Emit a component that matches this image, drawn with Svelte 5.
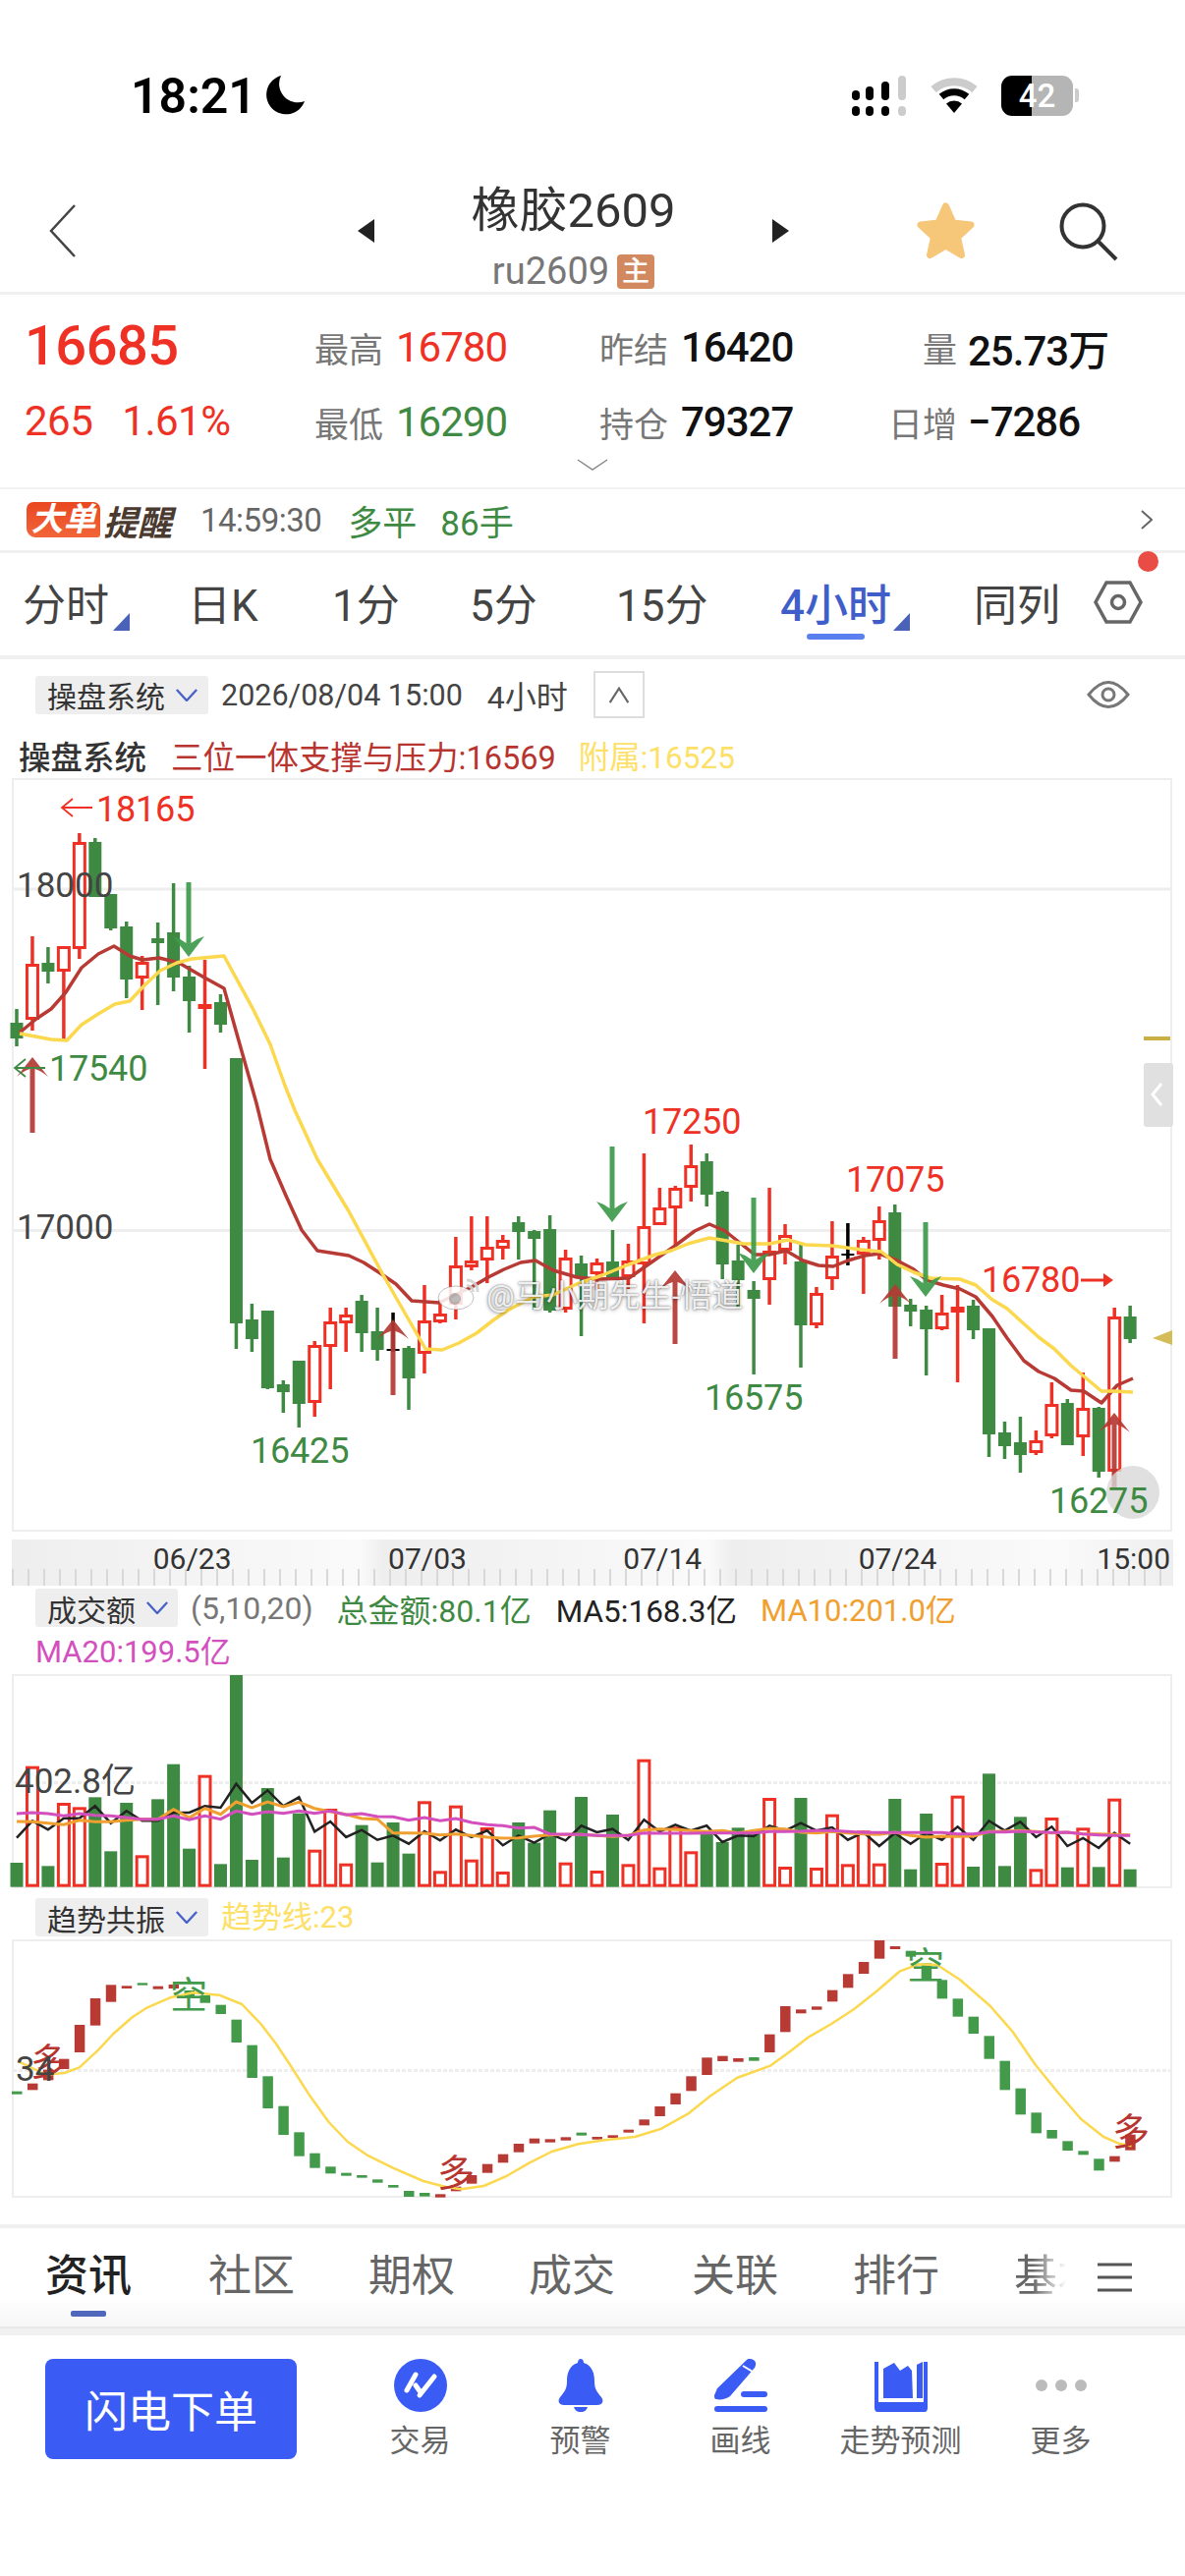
<script>
  const xOf = (i) => 17 + 15.96 * i;
  const pts = (a) => a.map((p) => p.join(',')).join(' ');
  const candles = [
    ['g',1041,1057,1027,1065],['r',981,1038,953,1049],['g',980,989,964,1001],['r',963,989,963,1058],
    ['r',857,966,848,976],['g',857,913,853,913],['g',910,945,910,947],['g',943,997,938,1016],
    ['r',979,996,973,1028],['g',955,960,939,1023],['g',949,995,899,1009],['g',994,1019,983,1051],
    ['r',1022,1027,977,1088],['g',1020,1043,1012,1051],['g',1077,1347,1077,1373],['g',1343,1363,1327,1376],
    ['g',1334,1413,1334,1414],['g',1409,1417,1405,1438],['g',1385,1429,1385,1453],['r',1369,1428,1365,1442],
    ['r',1345,1371,1331,1414],['r',1338,1347,1331,1376],['g',1324,1357,1318,1376],['g',1355,1374,1331,1385],
    ['k',1373,1375,1336,1376],['g',1372,1403,1370,1435],['r',1344,1378,1308,1398],['r',1337,1346,1323,1347],
    ['r',1288,1328,1259,1343],['r',1283,1290,1238,1293],['r',1269,1283,1238,1306],['r',1262,1271,1257,1282],
    ['g',1244,1254,1238,1282],['g',1253,1261,1252,1333],['g',1251,1334,1237,1336],['r',1280,1333,1272,1336],
    ['g',1286,1300,1278,1360],['r',1285,1297,1281,1313],['g',1284,1300,1252,1303],['r',1283,1300,1266,1312],
    ['r',1248,1287,1174,1347],['r',1229,1247,1209,1247],['r',1209,1230,1207,1268],['r',1186,1209,1165,1223],
    ['g',1182,1216,1174,1228],['g',1213,1287,1212,1302],['g',1283,1303,1267,1332],['g',1313,1322,1304,1399],
    ['r',1273,1303,1209,1328],['r',1257,1273,1246,1287],['g',1284,1349,1267,1392],['r',1316,1349,1310,1352],
    ['r',1278,1302,1243,1313],['k',1276,1278,1245,1288],['r',1262,1277,1259,1317],['r',1242,1263,1228,1282],
    ['g',1234,1330,1226,1330],['g',1328,1335,1322,1350],['g',1333,1353,1329,1400],['r',1336,1353,1318,1354],
    ['r',1330,1336,1308,1407],['g',1329,1354,1323,1363],['g',1352,1460,1352,1483],['g',1458,1472,1447,1485],
    ['g',1468,1481,1442,1499],['r',1466,1479,1456,1481],['r',1429,1462,1407,1464],['g',1428,1471,1424,1471],
    ['r',1433,1463,1397,1482],['g',1433,1498,1432,1504],['r',1340,1498,1331,1513],['g',1340,1363,1329,1367]
  ];
  const ma1 = [[20,1051],[37,1037],[52,1027],[67,1010],[83,985],[100,971],[116,963],[132,973],[145,977],[162,975],[182,980],[208,995],[228,1006],[246,1070],[261,1123],[275,1180],[291,1217],[307,1252],[323,1273],[355,1278],[370,1285],[387,1296],[403,1307],[419,1324],[447,1326],[463,1318],[480,1310],[497,1300],[513,1292],[530,1285],[545,1283],[563,1293],[587,1300],[608,1302],[640,1301],[657,1289],[687,1268],[707,1253],[722,1246],[738,1253],[753,1265],[768,1277],[783,1277],[800,1273],[817,1283],[833,1288],[848,1289],[863,1283],[880,1278],[895,1276],[913,1283],[930,1292],[943,1303],[960,1308],[977,1312],[993,1320],[1010,1340],[1025,1362],[1042,1385],[1057,1396],[1073,1403],[1090,1415],[1103,1416],[1121,1428],[1137,1410],[1153,1403]];
  const ma2 = [[20,1052],[52,1058],[68,1059],[83,1043],[100,1032],[117,1022],[132,1019],[147,1003],[163,988],[180,980],[195,976],[228,973],[258,1028],[275,1063],[290,1105],[300,1130],[323,1180],[355,1233],[390,1298],[433,1373],[450,1374],[467,1367],[485,1357],[503,1343],[518,1333],[543,1320],[563,1318],[587,1307],[613,1298],[640,1287],[667,1277],[683,1273],[700,1266],[722,1260],[740,1263],[757,1266],[783,1266],[802,1262],[820,1267],[847,1268],[877,1272],[897,1274],[913,1287],[930,1295],[947,1301],[977,1302],[993,1308],[1010,1323],[1025,1332],[1057,1361],[1073,1373],[1090,1390],[1121,1416],[1133,1416],[1153,1417]];
  const upArrows = [[33,1076,1153],[400,1343,1420],[687,1293,1368],[911,1307,1383],[1134,1438,1515]];
  const downArrows = [[192,898,974],[623,1167,1244],[767,1219,1296],[942,1244,1320]];
  const labels = [
    ['r',98,836,'18165'],['g',50,1100,'17540'],['r',654,1154,'17250'],['r',861,1213,'17075'],
    ['g',255,1489,'16425'],['g',717,1435,'16575'],['r',999,1315,'16780'],['g',1068,1540,'16275']
  ];
  const volRaw = 'g588 r293 g598 r405 r418 g388 g553 g405 r565 g394 g287 g545 r320 g592 g15 g579 g360 g572 g437 r548 r423 r590 g473 g587 g465 g560 r400 r613 r413 r578 r480 r615 g465 g527 g428 r587 g387 r612 g441 r592 r272 r602 r478 r553 g497 g525 g481 g500 r390 r600 g390 r603 r440 r592 r490 r590 g393 g608 g438 r588 r383 g600 g316 g598 g448 r607 r450 g602 r481 g601 r392 g608'.split(' ');
  const vols = volRaw.map((s) => ({ c: s[0], y: 1700 + Number(s.slice(1)) / 3 }));
  const VB = 1700 + 662 / 3;
  const line3 = (a) => a.map((v, i) => [xOf(i).toFixed(1), (1700 + v / 3).toFixed(1)].join(',')).join(' ');
  const vBlack = [512,460,487,452,452,415,467,430,460,460,435,435,415,420,347,405,367,415,388,493,462,510,488,518,505,530,492,520,487,510,490,535,505,527,500,520,475,495,485,518,457,493,472,490,475,525,505,507,475,490,467,490,480,518,495,537,497,530,497,518,478,518,460,490,463,510,478,537,513,543,497,530];
  const vOrange = [462,463,467,472,458,463,463,458,455,455,425,450,422,440,402,420,402,417,403,422,432,440,453,455,497,497,498,503,500,505,510,513,512,507,503,502,502,505,508,505,488,485,487,490,493,490,497,490,483,485,495,497,493,497,500,502,495,505,510,507,508,507,493,492,490,493,497,495,500,500,502,503];
  const vPink = [438,435,438,445,438,443,445,450,455,455,445,457,445,455,430,440,432,437,430,437,430,442,438,447,448,458,450,460,453,465,472,475,482,480,500,501,502,505,505,505,497,498,498,498,497,497,497,497,493,493,492,490,490,493,496,496,496,496,496,496,500,500,494,494,492,494,496,495,500,503,505,505];
  const osc = [['g',626,635],['r',602,622],['r',560,592],['r',527,558],['r',423,507],['r',342,425],['r',301,353],['r',304,312],['g',295,302],['r',305,314],['r',300,312],['g',318,340],['g',333,356],['g',362,390],['g',407,477],['g',485,585],['g',580,678],['g',671,759],['g',751,824],['g',815,860],['g',856,877],['g',875,884],['g',882,890],['g',895,905],['g',912,920],['g',930,948],['g',936,947],['r',940,950],['r',917,931],['r',882,908],['r',848,875],['r',818,844],['r',786,812],['r',770,785],['r',772,782],['r',766,776],['g',752,761],['r',765,773],['r',760,768],['r',743,752],['r',712,730],['r',672,702],['r',632,666],['r',580,625],['r',523,576],['r',518,534],['r',525,536],['g',522,533],['r',452,507],['r',366,445],['r',376,388],['r',367,377],['r',317,352],['r',268,310],['r',231,267],['r',165,221],['r',183,192],['g',197,215],['g',235,285],['g',286,343],['g',343,398],['g',398,450],['g',457,527],['g',533,622],['g',617,697],['g',691,754],['g',744,770],['g',778,807],['g',808,820],['g',832,868],['r',824,841],['r',758,806]];
  const oscLine = [[25,535],[60,575],[85,570],[105,553],[130,500],[150,450],[175,400],[195,370],[225,340],[255,325],[290,332],[320,360],[345,420],[365,480],[385,550],[410,640],[435,720],[460,780],[485,820],[520,860],[560,900],[590,918],[610,925],[640,915],[670,885],[700,845],[730,810],[765,787],[800,775],[840,765],[875,740],[910,695],[940,640],[975,585],[1020,547],[1045,505],[1070,460],[1100,420],[1130,375],[1160,320],[1190,260],[1215,238],[1240,240],[1270,285],[1310,365],[1340,445],[1370,545],[1400,630],[1430,710],[1460,765],[1480,785],[1497,793]].map(([x, y]) => [(x / 1.3).toFixed(1), (1920 + y / 3).toFixed(1)]);
  const oscMarks = [['r',50,2112,'多'],['g',192,2044,'空'],['r',464,2225,'多'],['g',942,2014,'空'],['r',1151,2183,'多']];
  const chartTabs = [['分时',1],['日K'],['1分'],['5分'],['15分'],['4小时',1,1],['同列']];
  const infoTabs = ['社区','期权','成交','关联','排行'];
  const dates = ['06/23','07/03','07/14','07/24'];
</script>

<div class="page">
  <header class="status">
    <span class="clock">18:21</span>
    <svg class="moon" viewBox="0 0 39 40"><path d="M15 0A20 20 0 1 0 39 26A19 19 0 0 1 15 0Z" /></svg>
    <svg class="signal" viewBox="0 0 58 41">
      <rect x="2" y="15" width="8" height="10" rx="4" /><rect x="2" y="31" width="8" height="10" rx="4" />
      <rect x="16" y="11" width="8" height="14" rx="4" /><rect x="16" y="31" width="8" height="10" rx="4" />
      <rect x="32" y="6" width="8" height="19" rx="4" /><rect x="32" y="31" width="8" height="10" rx="4" />
      <rect class="off" x="49" y="0" width="8" height="25" rx="4" /><rect class="off" x="49" y="31" width="8" height="10" rx="4" />
    </svg>
    <svg class="wifi" viewBox="0 0 50 37">
      <path class="wa" d="M4 13A32 32 0 0 1 46 13" />
      <path class="wb" d="M12 20.5A20 20 0 0 1 38 20.500" />
      <path class="wc" d="M25 37L17 27.500A12 12 0 0 1 33 27.500Z" />
    </svg>
    <div class="battery"><span>42</span></div>
    <i class="nub"></i>
  </header>

  <nav class="nav">
    <svg class="back" viewBox="0 0 27 54"><path d="M26 1L2 27L26 53" /></svg>
    <svg class="tri-l" viewBox="0 0 17 24"><path d="M17 0V24L0 12Z" /></svg>
    <div class="title">
      <div class="name">橡胶2609</div>
      <div class="code">ru2609<b>主</b></div>
    </div>
    <svg class="tri-r" viewBox="0 0 17 24"><path d="M0 0V24L17 12Z" /></svg>
    <svg class="star" viewBox="0 0 61 60"><path d="M30.500 5L38 22L56 24L42.500 36.500L46.500 54.500L30.500 45L14.500 54.500L18.500 36.500L5 24L23 22Z" /></svg>
    <svg class="search" viewBox="0 0 60 60"><circle cx="24" cy="24" r="21.500" /><path d="M40 40L58 58" /></svg>
  </nav>

  <section class="quote">
    <div class="last">16685</div>
    <div class="cell"><span class="lbl">最高</span><span class="val up">16780</span></div>
    <div class="cell"><span class="lbl">昨结</span><span class="val strong">16420</span></div>
    <div class="cell end"><span class="lbl">量</span><span class="val strong">25.73万</span></div>
    <div class="change"><span>265</span><span>1.61%</span></div>
    <div class="cell"><span class="lbl">最低</span><span class="val down">16290</span></div>
    <div class="cell"><span class="lbl">持仓</span><span class="val strong">79327</span></div>
    <div class="cell end"><span class="lbl">日增</span><span class="val strong">−7286</span></div>
    <svg class="more" viewBox="0 0 32 12"><path d="M1 1L16 11L31 1" /></svg>
  </section>

  <section class="alert">
    <span class="badge">大单</span><span class="remind">提醒</span>
    <span class="atime">14:59:30</span>
    <span class="agreen">多平</span><span class="agreen">86手</span>
    <svg class="achev" viewBox="0 0 12 20"><path d="M1 1L11 10L1 19" /></svg>
  </section>

  <section class="tabs">
    {#each chartTabs as t}
      <div class="tab" class:on={t[2]}>
        <span>{t[0]}</span>
        {#if t[1]}<svg class="corner" viewBox="0 0 17 18"><path d="M17 0V18H0Z" /></svg>{/if}
        {#if t[2]}<i class="bar"></i>{/if}
      </div>
    {/each}
    <div class="hexwrap">
      <svg class="hex" viewBox="0 0 50 44"><path d="M13 2H37L48 22L37 42H13L2 22Z" /><circle cx="25" cy="22" r="6.500" /></svg>
      <i class="dot"></i>
    </div>
  </section>

  <section class="toolbar">
    <div class="chip wide">操盘系统<svg viewBox="0 0 26 14"><path d="M2 1L13 13L24 1" /></svg></div>
    <span class="stamp">2026/08/04 15:00</span>
    <span class="stamp hr">4小时</span>
    <div class="collapse"><svg viewBox="0 0 26 20"><path d="M2 19L13 2L24 19" /></svg></div>
    <svg class="eye" viewBox="0 0 44 30"><path d="M2 15Q22 -10 42 15Q22 40 2 15Z" /><circle cx="22" cy="15" r="6" /></svg>
  </section>

  <section class="legend">
    <span class="dark">操盘系统</span>
    <span class="rust">三位一体支撑与压力:16569</span>
    <span class="gold">附属:16525</span>
  </section>

  <section class="kline">
    <svg class="plot" viewBox="0 790 1206 772">
      <rect class="frame" x="13" y="793" width="1179" height="765" />
      <line class="grid" x1="13" x2="1192" y1="905" y2="905" />
      <line class="grid" x1="13" x2="1192" y1="1252.500" y2="1252.500" />
      {#each candles as c, i}
        <line class={'wick ' + c[0]} x1={xOf(i)} x2={xOf(i)} y1={c[3]} y2={c[4]} />
        {#if c[0] === 'r'}
          <rect class="hollow" x={xOf(i) - 5.5} y={c[1] + 1.5} width="11" height={Math.max(c[2] - c[1] - 3, 1)} />
        {:else}
          <rect class={'solid ' + c[0]} x={xOf(i) - 6.5} y={c[1]} width="13" height={c[2] - c[1]} />
        {/if}
      {/each}
      <text class="axis" x="17" y="913">18000</text>
      <text class="axis" x="17" y="1261">17000</text>
      <polyline class="ma red" points={pts(ma1)} />
      <polyline class="ma yellow" points={pts(ma2)} />
      {#each upArrows as [x, t, b]}
        <path class="arrow-up" d={`M${x - 2.500} ${t + 12}V${b}H${x + 2.500}V${t + 12}Q${x + 9} ${t + 14} ${x + 16} ${t + 20}L${x} ${t}L${x - 16} ${t + 20}Q${x - 9} ${t + 14} ${x - 2.500} ${t + 12}Z`} />
      {/each}
      {#each downArrows as [x, t, b]}
        <path class="arrow-down" d={`M${x - 2.500} ${t}H${x + 2.500}V${b - 14}Q${x + 9} ${b - 19} ${x + 16} ${b - 21}L${x} ${b}L${x - 16} ${b - 21}Q${x - 9} ${b - 19} ${x - 2.500} ${b - 14}Z`} />
      {/each}
      <circle class="fab" cx="1153" cy="1519" r="27" />
      {#each labels as [c, x, y, s]}
        <text class={'tag ' + c} x={x} y={y}>{s}</text>
      {/each}
      <path class="thin r" d="M94 822H63M74 813L63 822L74 831" />
      <path class="thin g" d="M46 1087H15M26 1078L15 1087L26 1096" />
      <path class="thick r" d="M1100 1303H1128" />
      <path class="fill-r" d="M1123 1296L1133 1303L1123 1310Z" />
      <rect class="goldtick" x="1164" y="1055" width="27" height="4" />
      <path class="goldtri" d="M1173 1362L1193 1354V1369Z" />
      <rect class="tabbg" x="1164" y="1082" width="30" height="65" rx="3" />
      <path class="tabchev" d="M1182 1103L1173 1114L1182 1125" />
    </svg>
    <div class="watermark">
      <svg viewBox="0 0 44 36"><ellipse cx="19" cy="23" rx="18" ry="12" /><circle cx="18" cy="24" r="6" class="wk" /><path d="M30 5A11 11 0 0 1 41 17M30 11A5 5 0 0 1 36 17" class="wl" /></svg>
      <span>@马小期先生-悟道</span>
    </div>
  </section>

  <section class="timeline">
    {#each dates as d}<span>{d}</span>{/each}
    <span class="lastd">15:00</span>
  </section>

  <section class="vlegend">
    <div class="vrow">
      <div class="chip">成交额<svg viewBox="0 0 26 14"><path d="M2 1L13 13L24 1" /></svg></div>
      <span class="paren">(5,10,20)</span>
      <span class="vg">总金额:80.1亿</span>
      <span class="vk">MA5:168.3亿</span>
      <span class="vo">MA10:201.0亿</span>
    </div>
    <div class="vp">MA20:199.5亿</div>
  </section>

  <section class="panel vol">
    <svg class="plot" viewBox="0 1703 1206 222">
      <rect class="frame" x="13" y="1705" width="1179" height="216" />
      <line class="dots" x1="13" x2="1192" y1="1814.500" y2="1814.500" />
      {#each vols as v, i}
        {#if v.c === 'r'}
          <rect class="hollow" x={xOf(i) - 5.500} y={v.y + 1.500} width="11" height={VB - v.y - 3} />
        {:else}
          <rect class="solid g" x={xOf(i) - 6.500} y={v.y} width="13" height={VB - v.y} />
        {/if}
      {/each}
      <polyline class="vline k" points={line3(vBlack)} />
      <polyline class="vline o" points={line3(vOrange)} />
      <polyline class="vline p" points={line3(vPink)} />
      <text class="axis" x="15" y="1825">402.8亿</text>
    </svg>
  </section>

  <section class="olegend">
    <div class="chip wide">趋势共振<svg viewBox="0 0 26 14"><path d="M2 1L13 13L24 1" /></svg></div>
    <span class="gold">趋势线:23</span>
  </section>

  <section class="panel osc">
    <svg class="plot" viewBox="0 1973 1206 267">
      <rect class="frame" x="13" y="1975" width="1179" height="261" />
      <line class="dots" x1="13" x2="1192" y1="2107.500" y2="2107.500" />
      {#each osc as [c, a, b], i}
        <rect class={'obar ' + c} x={xOf(i) - 5} y={1920 + a / 3} width="10.500" height={(b - a) / 3} />
      {/each}
      <polyline class="ma yellow oy" points={pts(oscLine)} />
      {#each oscMarks as [c, x, y, s]}
        <text class={'omark ' + c} x={x} y={y}>{s}</text>
      {/each}
      <text class="axis" x="16" y="2118">34</text>
    </svg>
  </section>

  <section class="info">
    <div class="itab on">资讯<i></i></div>
    {#each infoTabs as t}<div class="itab">{t}</div>{/each}
    <div class="itab fade"><span>基本面</span></div>
    <svg class="menu" viewBox="0 0 35 30"><path d="M0 2H35M0 15H35M0 28H35" /></svg>
  </section>
  <div class="band"></div>

  <footer class="actions">
    <button class="flash">闪电下单</button>
    <div class="act">
      <svg viewBox="0 0 54 54"><circle cx="27" cy="27" r="27" class="bl" /><path d="M22 16L13 32M41 18L26 37M22 27L27 34" class="wh" /></svg>
      <span>交易</span>
    </div>
    <div class="act">
      <svg viewBox="0 0 48 54"><path class="bl" d="M24 0C26 0 27 2 27 4C36 7 38 15 38 23C38 31 41 34 45 39C48 43 46 47 41 47H7C2 47 0 43 3 39C7 34 10 31 10 23C10 15 12 7 21 4C21 2 22 0 24 0Z" /><path class="bl" d="M17 49H31C30 52 28 54 24 54C20 54 18 52 17 49Z" /></svg>
      <span>预警</span>
    </div>
    <div class="act">
      <svg viewBox="0 0 54 54"><path class="bl" d="M33 1C35 -1 39 0 41 2C43 4 42 7 41 9L16 38C12 41 6 42 2 41C0 41 0 39 0 37L3 30Z" /><path d="M29 7L39 13" class="wl2" /><rect class="bl" x="27" y="33" width="27" height="6" rx="3" /><rect class="bl" x="0" y="48" width="54" height="6" rx="3" /></svg>
      <span>画线</span>
    </div>
    <div class="act">
      <svg viewBox="0 0 54 54"><path class="bl" d="M0 3H4V44H50V3H54V50C54 52 53 54 51 54H3C1 54 0 52 0 50Z" /><path class="bl" d="M9 10L20 4L26 12L34 7L38 12L39 40H9Z" /><path class="bl" d="M43 6L49 3V40H43Z" /></svg>
      <span>走势预测</span>
    </div>
    <div class="act">
      <svg class="dots3" viewBox="0 0 54 54"><circle cx="7" cy="27" r="6" /><circle cx="27" cy="27" r="6" /><circle cx="47" cy="27" r="6" /></svg>
      <span>更多</span>
    </div>
  </footer>
</div>

<style>
  :global(body) { margin: 0; background: #fff; }
  .page {
    width: 1206px; height: 2622px; overflow: hidden; background: #fff; color: #333;
    font-family: Roboto, "Noto Sans CJK SC", sans-serif; font-weight: 400;
  }
  svg { display: block; }

  .status { height: 150px; display: flex; align-items: flex-start; padding: 77px 0 0 133px; box-sizing: border-box; }
  .clock { font-size: 50px; line-height: 42px; font-weight: 600; color: #000; width: 138px; font-family: Roboto, sans-serif; }
  .moon { width: 39px; height: 40px; fill: #000; }
  .signal { width: 58px; height: 41px; margin-left: 555px; fill: #000; }
  .signal .off { fill: #ccc; }
  .wifi { width: 50px; height: 37px; margin: 1px 0 0 23px; fill: none; }
  .wa { stroke: #ccc; stroke-width: 8; }
  .wb { stroke: #000; stroke-width: 7; }
  .wc { fill: #000; }
  .battery {
    width: 73px; height: 41px; margin-left: 23px; border-radius: 11px; display: flex; align-items: center; justify-content: center;
    background: linear-gradient(90deg, #000 42%, #b5b5b5 42%); color: #fff; font-size: 33px; font-weight: 500;
  }
  .nub { width: 4px; height: 14px; margin: 13px 0 0 2px; background: #ccc; border-radius: 0 3px 3px 0; }

  .nav { height: 147px; display: flex; align-items: flex-start; border-bottom: 3px solid #f0f0f0; padding-left: 50px; }
  .back { width: 27px; height: 54px; margin-top: 58px; fill: none; stroke: #444; stroke-width: 2.500; }
  .tri-l { width: 17px; height: 24px; margin: 73px 0 0 287px; fill: #222; }
  .tri-r { width: 17px; height: 24px; margin-top: 73px; fill: #222; }
  .title { width: 405px; text-align: center; padding-top: 38px; }
  .name { font-size: 49px; line-height: 54px; color: #333; }
  .code { font-size: 38px; line-height: 38px; color: #777; margin-top: 15px; display: flex; justify-content: center; align-items: center; gap: 8px; }
  .code b { width: 38px; height: 35px; background: #d2895f; color: #fff; font-size: 28px; line-height: 35px; border-radius: 4px; font-weight: 500; }
  .star { width: 61px; height: 60px; margin: 55px 0 0 129px; fill: #f6c679; stroke: #f6c679; stroke-width: 7; stroke-linejoin: round; }
  .search { width: 60px; height: 60px; margin: 56px 0 0 85px; fill: none; stroke: #333; stroke-width: 4; }

  .quote {
    position: relative; height: 198px; border-bottom: 2px solid #f2f2f2; box-sizing: border-box;
    display: grid; grid-template-columns: 296px 290px 290px 1fr; grid-template-rows: 76px 76px; padding: 15px 0 0 25px;
  }
  .last { font-size: 56px; line-height: 74px; font-weight: 500; color: #ee3124; letter-spacing: -0.500px; }
  .change { display: flex; gap: 30px; font-size: 42px; line-height: 76px; color: #ee3124; letter-spacing: -0.500px; }
  .cell { display: flex; align-items: center; white-space: nowrap; }
  .lbl { width: 83px; font-size: 35px; color: #777; flex: none; margin-left: -1px; }
  .val { font-size: 42px; letter-spacing: -1px; }
  .end .lbl { width: 74px; text-align: right; margin-right: 11px; }
  .up { color: #ee3124; }
  .down { color: #3f8a43; }
  .strong { color: #111; font-weight: 500; }
  .more { position: absolute; left: 587px; top: 167px; width: 32px; height: 12px; fill: none; stroke: #888; stroke-width: 1.500; }

  .alert { height: 62px; display: flex; align-items: center; padding-left: 27px; border-bottom: 3px solid #f0f0f0; }
  .badge {
    width: 75px; height: 36px; background: linear-gradient(#e9471f, #f26539); color: #fff; font-size: 33px; line-height: 36px; font-weight: 700;
    border-radius: 7px 7px 3px 9px; text-align: center; font-style: italic;
  }
  .remind { margin-left: 3px; font-size: 35px; font-weight: 700; font-style: italic; color: #4a3a30; }
  .atime { margin-left: 29px; font-size: 33px; color: #666; letter-spacing: -0.500px; }
  .agreen { font-size: 35px; color: #3f8a43; margin-left: 27px; }
  .agreen + .agreen { margin-left: 24px; }
  .achev { width: 12px; height: 20px; margin-left: auto; margin-right: 33px; fill: none; stroke: #666; stroke-width: 2; }

  .tabs {
    position: relative; height: 100px; padding: 0 0 4px 23px; display: grid; grid-template-columns: 168px 147px 140px 149px 167px 197px 122px 1fr;
    align-items: center; border-bottom: 4px solid #f0f0f0; box-sizing: content-box;
  }
  .tab { position: relative; display: flex; align-items: center; font-size: 44px; color: #444; height: 100%; }
  .tab.on { color: #3f5ec9; font-weight: 500; }
  .corner { width: 17px; height: 18px; margin: 40px 0 0 4px; fill: #4a62b8; }
  .tab.on .corner { margin-left: 2px; }
  .bar { position: absolute; left: 27px; bottom: 12px; width: 59px; height: 6px; border-radius: 3px; background: #5a80f0; }
  .hexwrap { position: relative; }
  .hex { width: 50px; height: 44px; fill: none; stroke: #666; stroke-width: 3.500; }
  .dot { position: absolute; left: 45px; top: -30px; width: 21px; height: 21px; border-radius: 50%; background: #e94b45; }

  .toolbar { height: 75px; display: flex; align-items: center; padding: 0 0 3px 36px; box-sizing: border-box; }
  .chip {
    height: 39px; width: 145px; background: #eee; border-radius: 3px; display: flex; align-items: center; font-size: 30px; color: #333;
    padding-left: 12px; box-sizing: border-box; flex: none;
  }
  .chip.wide { width: 176px; }
  .chip svg { width: 24px; height: 13px; margin-left: 10px; fill: none; stroke: #4a62c8; stroke-width: 2.500; }
  .stamp { font-size: 30.500px; margin-left: 13px; color: #444; white-space: nowrap; }
  .stamp.hr { margin-left: 25px; font-size: 32px; }
  .collapse { width: 52px; height: 48px; margin-left: 26px; border: 2px solid #ddd; box-sizing: border-box; display: flex; align-items: center; justify-content: center; }
  .collapse svg { width: 24px; height: 17px; fill: none; stroke: #666; stroke-width: 2.500; }
  .eye { width: 44px; height: 30px; margin-left: 450px; fill: none; stroke: #777; stroke-width: 3; }

  .legend { height: 44px; display: flex; align-items: center; font-size: 32.500px; padding-left: 19px; }
  .dark { color: #333; font-weight: 500; }
  .rust { color: #b8342f; margin-left: 25px; }
  .gold { color: #fde068; margin-left: 24px; }
  .legend .gold { font-size: 31.500px; margin-left: 23px; }

  .kline { position: relative; height: 772px; }
  .plot { width: 1206px; height: 100%; }
  .frame { fill: none; stroke: #eee; stroke-width: 2; }
  .grid { stroke: #eee; stroke-width: 3; }
  .wick { stroke-width: 3.500; }
  .wick.r { stroke: #ee3124; }
  .wick.g { stroke: #3f8a43; }
  .wick.k { stroke: #000; }
  .hollow { fill: #fff; stroke: #ee3124; stroke-width: 3; }
  .solid.g { fill: #3f8a43; }
  .solid.k { fill: #000; }
  .axis { font-size: 35px; fill: #444; }
  .ma { fill: none; stroke-width: 3.500; stroke-linejoin: round; }
  .ma.red { stroke: #b83a35; }
  .ma.yellow { stroke: #fbd84e; }
  .arrow-up { fill: #b53a33; opacity: 0.92; }
  .arrow-down { fill: #3e9a4c; opacity: 0.92; }
  .fab { fill: #d8d8d8; opacity: 0.8; }
  .tag { font-size: 36px; letter-spacing: -0.200px; }
  .tag.r { fill: #ee3124; }
  .tag.g { fill: #3f8a43; }
  .thin { fill: none; stroke-width: 1.800; }
  .thin.r { stroke: #ee3124; }
  .thin.g { stroke: #3f8a43; }
  .thick.r { stroke: #ee3124; stroke-width: 3; }
  .fill-r { fill: #ee3124; }
  .goldtick { fill: #c9b045; }
  .goldtri { fill: #d4bc58; }
  .tabbg { fill: #e0e0e0; }
  .tabchev { fill: none; stroke: #fff; stroke-width: 3; }

  .watermark {
    position: absolute; left: 445px; top: 503px; display: flex; align-items: center; gap: 6px; color: rgba(255, 255, 255, 0.9);
    font-size: 32px; white-space: nowrap; text-shadow: 0 0 2px rgba(0, 0, 0, 0.55), 0 1px 4px rgba(0, 0, 0, 0.35);
  }
  .watermark svg { width: 44px; height: 36px; }
  .watermark ellipse { fill: rgba(255, 255, 255, 0.85); stroke: rgba(0, 0, 0, 0.25); }
  .wk { fill: rgba(120, 120, 120, 0.5); }
  .wl { fill: none; stroke: rgba(210, 210, 210, 0.9); stroke-width: 3; }

  .timeline {
    width: 1182px; margin: 5px 0 0 12px; height: 47px; display: flex; align-items: flex-start; box-sizing: border-box; padding: 2px 3px 0 64px;
    font-size: 30px; color: #333;
    background:
      repeating-linear-gradient(90deg, #d8d8d8 0 2px, transparent 2px 16px) 0 100% / 100% 17px no-repeat,
      linear-gradient(90deg, #eee, #fafafa 30%, #eee 32%, #fafafa 60%, #eee 62%, #fafafa 90%, #eee);
  }
  .timeline span { width: 239.300px; text-align: center; line-height: 36px; flex: none; }
  .timeline .lastd { width: auto; flex: 1; text-align: right; }

  .vlegend { height: 89px; padding: 3px 0 0 36px; box-sizing: border-box; font-size: 31px; }
  .vrow { display: flex; align-items: center; height: 39px; white-space: nowrap; }
  .paren { color: #777; margin-left: 13px; font-size: 32px; }
  .vg { color: #3f8a43; margin-left: 24px; font-size: 32px; }
  .vk { color: #222; margin-left: 25px; font-size: 31.500px; }
  .vo { color: #f0a030; margin-left: 24px; }
  .vp { color: #d44fbe; margin-top: 5px; line-height: 42px; }

  .panel.vol { height: 222px; }
  .dots { stroke: #eee; stroke-width: 3; stroke-dasharray: 4 2; }
  .vline { fill: none; stroke-width: 2.500; stroke-linejoin: miter; }
  .vline.k { stroke: #222; }
  .vline.o { stroke: #f0a030; stroke-width: 3; }
  .vline.p { stroke: #d44fbe; stroke-width: 3; }

  .olegend { height: 48px; padding: 7px 0 0 36px; box-sizing: border-box; display: flex; align-items: flex-start; font-size: 31px; }
  .olegend .gold { margin-left: 13px; line-height: 39px; }

  .panel.osc { height: 267px; }
  .obar.r { fill: #b83a35; }
  .obar.g { fill: #429a4a; }
  .oy { stroke-width: 2.500; }
  .omark { font-size: 38px; text-anchor: middle; font-weight: 400; }
  .omark.r { fill: #b8342f; }
  .omark.g { fill: #429a4a; }

  .info {
    margin-top: 24px; position: relative; height: 100px; border-top: 4px solid #f0f0f0; display: grid;
    grid-template-columns: 166px 163px 163px 166px 164px 164px 85px 1fr; padding-left: 46px; align-items: center;
    background: linear-gradient(#fff 70%, #f6f6f6); box-sizing: content-box; font-size: 44px; color: #666;
  }
  .itab { position: relative; line-height: 100px; height: 100px; margin-top: -2px; }
  .itab.on { color: #222; font-weight: 500; }
  .itab i { position: absolute; left: 26px; top: 85px; width: 36px; height: 6px; background: #5067bb; border-radius: 2px; }
  .itab.fade { width: 53px; overflow: hidden; white-space: nowrap; -webkit-mask-image: linear-gradient(90deg, #000 35%, transparent); mask-image: linear-gradient(90deg, #000 35%, transparent); }
  .menu { width: 35px; height: 30px; fill: none; stroke: #555; stroke-width: 3; }
  .band { height: 9px; background: #f0f0f0; border-top: 2px solid #e8e8e8; box-sizing: border-box; }

  .actions { display: flex; align-items: flex-start; padding: 24px 0 0 46px; }
  .flash {
    width: 256px; height: 102px; flex: none; border: 0; border-radius: 8px; background: #3a5cf5; color: #fff; font: inherit; font-size: 44px; padding: 0;
    margin-right: 44px; font-family: Roboto, "Noto Sans CJK SC", sans-serif;
  }
  .act { width: 163px; flex: none; display: flex; flex-direction: column; align-items: center; font-size: 31px; color: #666; }
  .act svg { width: 54px; height: 54px; }
  .act span { margin-top: 8px; line-height: 44px; white-space: nowrap; }
  .bl { fill: #3a5cf5; }
  .wh { fill: none; stroke: #fff; stroke-width: 5; stroke-linecap: round; }
  .wl2 { fill: none; stroke: #fff; stroke-width: 2; }
  .dots3 { fill: #bbb; }
</style>
